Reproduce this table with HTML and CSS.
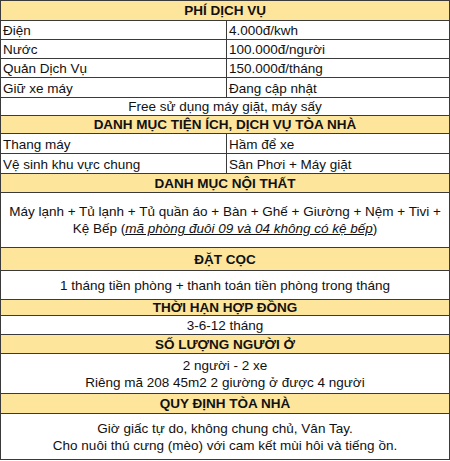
FILE: index.html
```html
<!DOCTYPE html>
<html lang="vi">
<head>
<meta charset="utf-8">
<title>Phí dịch vụ</title>
<link rel="stylesheet" href="styles.css">
</head>
<body>
<table class="sheet">
  <colgroup><col class="c1"><col class="c2"></colgroup>
  <tr class="r20"><th colspan="2">PHÍ DỊCH VỤ</th></tr>
  <tr class="r19"><td>Điện</td><td>4.000đ/kwh</td></tr>
  <tr class="r19"><td>Nước</td><td>100.000đ/người</td></tr>
  <tr class="r19"><td>Quản Dịch Vụ</td><td>150.000đ/tháng</td></tr>
  <tr class="r20"><td>Giữ xe máy</td><td>Đang cập nhật</td></tr>
  <tr class="r18"><td colspan="2" class="center">Free sử dụng máy giặt, máy sấy</td></tr>
  <tr class="r18"><th colspan="2">DANH MỤC TIỆN ÍCH, DỊCH VỤ TÒA NHÀ</th></tr>
  <tr class="r20"><td>Thang máy</td><td>Hầm để xe</td></tr>
  <tr class="r20"><td>Vệ sinh khu vực chung</td><td>Sân Phơi + Máy giặt</td></tr>
  <tr class="r19"><th colspan="2">DANH MỤC NỘI THẤT</th></tr>
  <tr class="r55"><td colspan="2" class="multi">Máy lạnh + Tủ lạnh + Tủ quần áo + Bàn + Ghế + Giường + Nệm + Tivi +<br>Kệ Bếp (<em class="note">mã phòng đuôi 09 và 04 không có kệ bếp</em>)</td></tr>
  <tr class="r23"><th colspan="2">ĐẶT CỌC</th></tr>
  <tr class="r29"><td colspan="2" class="multi">1 tháng tiền phòng + thanh toán tiền phòng trong tháng</td></tr>
  <tr class="r16"><th colspan="2">THỜI HẠN HỢP ĐỒNG</th></tr>
  <tr class="r19"><td colspan="2" class="center">3-6-12 tháng</td></tr>
  <tr class="r19"><th colspan="2">SỐ LƯỢNG NGƯỜI Ở</th></tr>
  <tr class="r40"><td colspan="2" class="multi">2 người - 2 xe<br>Riêng mã 208 45m2 2 giường ở được 4 người</td></tr>
  <tr class="r20"><th colspan="2">QUY ĐỊNH TÒA NHÀ</th></tr>
  <tr class="r46"><td colspan="2" class="multi">Giờ giấc tự do, không chung chủ, Vân Tay.<br>Cho nuôi thú cưng (mèo) với cam kết mùi hôi và tiếng ồn.</td></tr>
</table>
</body>
</html>
```

FILE: styles.css
```css
html, body {
  margin: 0;
  padding: 0;
  background: #ffffff;
}

.sheet {
  border-collapse: collapse;
  table-layout: fixed;
  width: 449px;
  margin: 0;
  font-family: "Liberation Sans", Arial, sans-serif;
  font-size: 13.5px;
  color: #111111;
}

.c1 { width: 226px; }
.c2 { width: 223px; }

.sheet th,
.sheet td {
  border: 1px solid #3a3a3a;
  padding: 0 2px;
  line-height: 15px;
  white-space: nowrap;
  overflow: hidden;
}

.sheet th {
  background: #fee59c;
  font-weight: bold;
  text-align: center;
  vertical-align: middle;
}

.sheet td {
  text-align: left;
  vertical-align: bottom;
  padding-bottom: 1px;
}

.sheet td.center {
  text-align: center;
  vertical-align: middle;
  padding-bottom: 0;
}

.sheet td.multi {
  text-align: center;
  vertical-align: middle;
  white-space: nowrap;
  line-height: 17px;
  padding: 0 2px;
}

.note {
  font-style: italic;
  text-decoration: underline;
}

.r16 { height: 16px; }
.r18 { height: 18px; }
.r19 { height: 19px; }
.r20 { height: 20px; }
.r23 { height: 23px; }
.r29 { height: 29px; }
.r40 { height: 40px; }
.r46 { height: 46px; }
.r55 { height: 55px; }
```
